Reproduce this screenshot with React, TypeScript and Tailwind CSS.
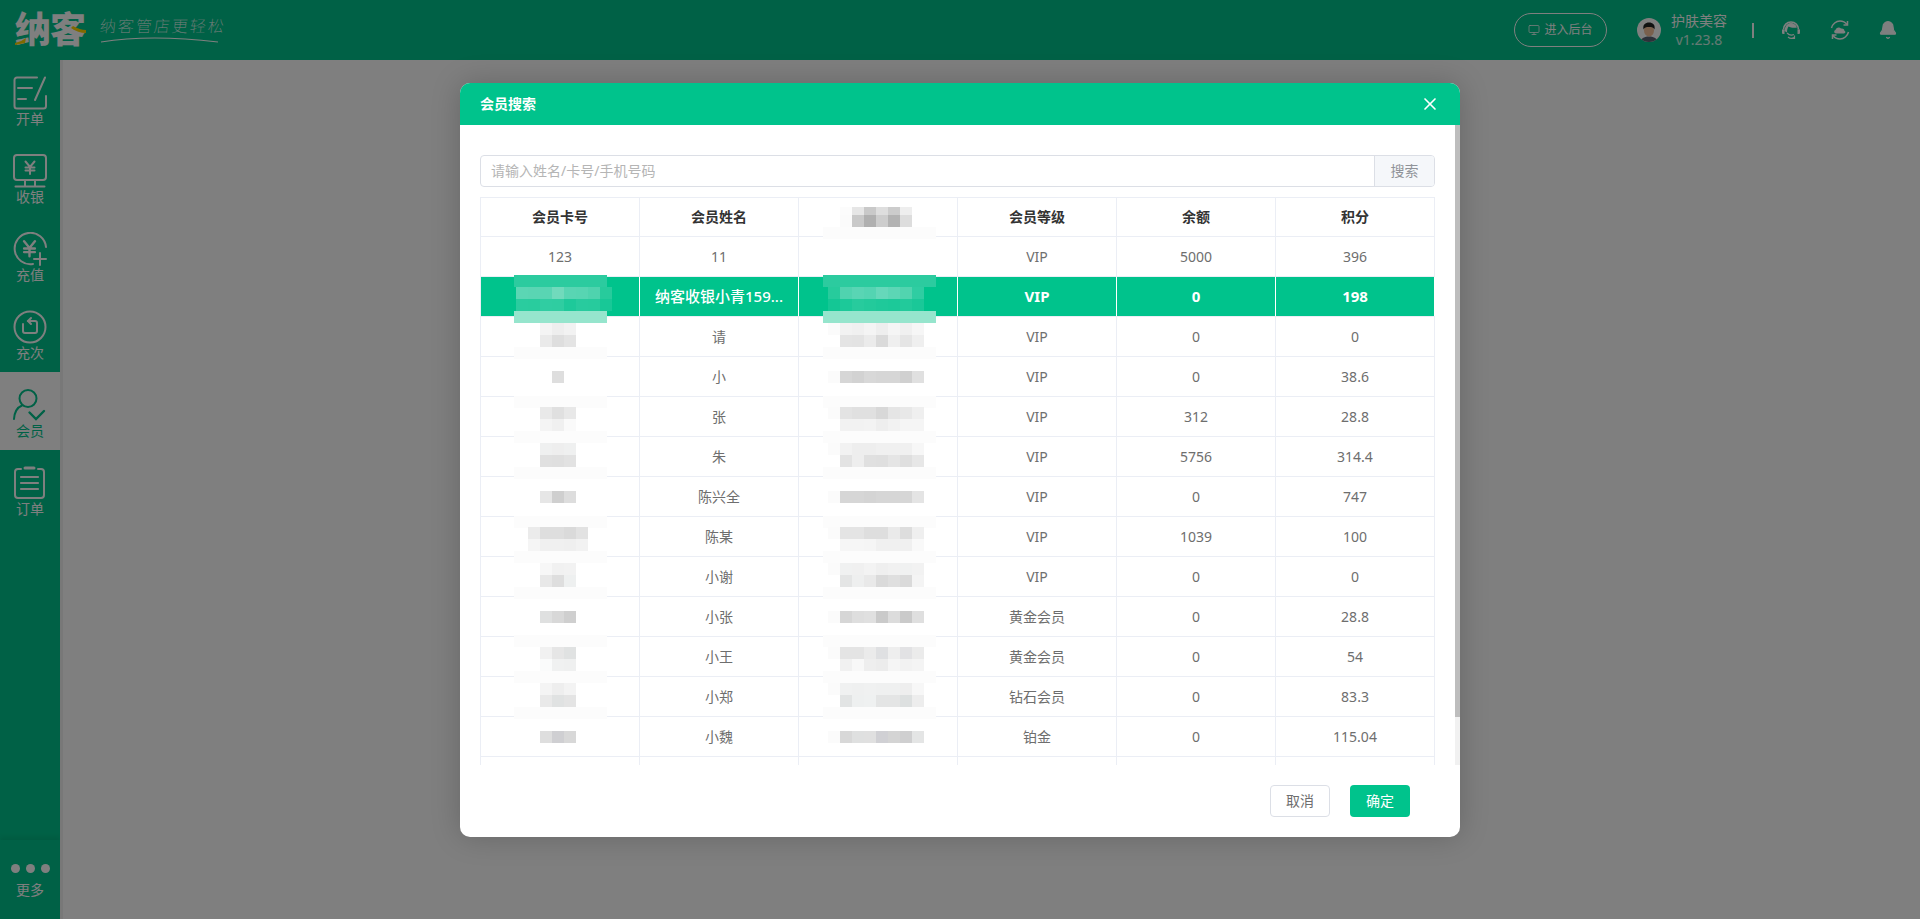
import { Bell, Monitor, X } from "lucide-react";

const navItems = [
  { label: "开单", icon: "order" },
  { label: "收银", icon: "cashier" },
  { label: "充值", icon: "recharge" },
  { label: "充次", icon: "times" },
  { label: "会员", icon: "member", active: true },
  { label: "订单", icon: "list" },
];

const rows = [
  { name: "11", card: "123", level: "VIP", balance: "5000", points: "396" },
  { name: "纳客收银小青159...", level: "VIP", balance: "0", points: "198", selected: true },
  { name: "请", level: "VIP", balance: "0", points: "0" },
  { name: "小", level: "VIP", balance: "0", points: "38.6" },
  { name: "张", level: "VIP", balance: "312", points: "28.8" },
  { name: "朱", level: "VIP", balance: "5756", points: "314.4" },
  { name: "陈兴全", level: "VIP", balance: "0", points: "747" },
  { name: "陈某", level: "VIP", balance: "1039", points: "100" },
  { name: "小谢", level: "VIP", balance: "0", points: "0" },
  { name: "小张", level: "黄金会员", balance: "0", points: "28.8" },
  { name: "小王", level: "黄金会员", balance: "0", points: "54" },
  { name: "小郑", level: "钻石会员", balance: "0", points: "83.3" },
  { name: "小魏", level: "铂金", balance: "0", points: "115.04" },
];

// pixelated (blurred out) areas of the screenshot: [x, y, height, colours]
const mosaicBlocks: [number, number, number, string][] = [
  [840, 207, 8, "#fcfcfc #e6e6e6 #c9c9c9 #dedede #cccccc #eeeeee"],
  [840, 215, 12, "#fbfbfb #c9c9c9 #b0b0b0 #cdcdcd #b3b3b3 #dddddd"],
  [516, 287, 12, "#5bd6b4 #5ad5b3 #59d5b3 #71dabc #59d5b3 #57d5b2 #4fd3ae #27cb9c"],
  [516, 299, 12, "#2acc9f #29cc9e #30cda2 #2fcda1 #1ec99a #28cb9e #27cb9d #18c897"],
  [828, 287, 12, "#27cb9c #50d3af #59d5b4 #54d4b2 #66d8ba #5cd6b5 #52d4af #2fcda2"],
  [828, 299, 12, "#14c795 #1cc999 #27cb9d #23ca9b #1fc99a #1cc999 #22ca9b #1ac898"],
  [540, 323, 12, "#f4f4f4 #eeeeee #f2f2f2"],
  [540, 335, 12, "#eaeaea #dedede #e4e4e4"],
  [828, 323, 12, "#fbfbfb #f2f2f2 #f0f0f0 #f4f4f4 #eeeeee #f5f5f5 #f0f0f0 #f6f6f6"],
  [828, 335, 12, "#ffffff #e4e4e4 #e3e3e3 #ebebeb #dadada #efefef #e5e5e5 #efefef"],
  [552, 371, 12, "#dedede"],
  [828, 371, 12, "#fbfbfb #d6d6d6 #d2d2d2 #d8d8d8 #d6d6d6 #d6d6d6 #d0d0d0 #e0e0e0"],
  [540, 407, 12, "#e9e9e9 #e0e0e0 #e8e8e8"],
  [540, 419, 12, "#f4f4f4 #f0f0f0 #fafafa"],
  [828, 407, 12, "#fbfbfb #e3e3e3 #e0e0e0 #e0e0e0 #d8d8d8 #e5e5e5 #e8e8e8 #efefef"],
  [828, 419, 12, "#ffffff #f2f2f2 #f2f2f2 #f3f3f3 #eeeeee #f2f2f2 #f5f5f5 #f5f5f5"],
  [540, 443, 12, "#eff0f0 #eeeeee #eff0f0"],
  [540, 455, 12, "#e0e0e0 #dfdfdf #e2e2e2"],
  [828, 443, 12, "#fbfbfb #f2f2f2 #eeeeee #eeeeee #f0f0f0 #f0f0f0 #f0f0f0 #f7f7f7"],
  [828, 455, 12, "#ffffff #e3e3e3 #eeeeee #e0e0e0 #dfdfdf #e5e5e5 #dfdfdf #e7e7e7"],
  [540, 491, 12, "#e6e6e6 #cfcfcf #dddddd"],
  [828, 491, 12, "#fbfbfb #d6d6d6 #d6d6d6 #d4d4d4 #d6d6d6 #d6d6d6 #d6d6d6 #e4e4e4"],
  [528, 527, 12, "#ebebeb #dedede #dedede #dadada #e2e2e2"],
  [528, 539, 12, "#f5f5f5 #f0f0f0 #f0f0f0 #efefef #f2f2f2"],
  [828, 527, 12, "#fbfbfb #e4e4e4 #e4e4e4 #dedede #dedede #eaeaea #dddddd #efefef"],
  [828, 539, 12, "#ffffff #f6f6f6 #f6f6f6 #f5f5f5 #f0f0f0 #f0f0f0 #f0f0f0 #f9f9f9"],
  [540, 563, 12, "#f7f7f7 #f1f1f1 #f2f2f2"],
  [540, 575, 12, "#e8e8e8 #dedede #eef0f0"],
  [828, 563, 12, "#fbfbfb #f0f1f1 #f0f0f0 #f3f3f3 #efefef #f1f1f1 #f0f1f1 #f2f2f2"],
  [828, 575, 12, "#ffffff #e4e5e5 #eeefef #e9e9e9 #dadada #dfdfdf #dadada #f4f4f4"],
  [540, 611, 12, "#dfe0e0 #d8d8d8 #cfcfcf"],
  [828, 611, 12, "#fbfbfb #d6d6d6 #dedede #e0e0e0 #cacaca #dcdcdc #cacaca #dfdfdf"],
  [540, 647, 12, "#f1f1f1 #e6e6e6 #e0e2e2"],
  [540, 659, 12, "#fafbfb #f0f1f1 #eff0f0"],
  [828, 647, 12, "#fbfbfb #e4e4e4 #e4e4e4 #ebebeb #dfe0e2 #eeeeee #e2e2e4 #ebebeb"],
  [828, 659, 12, "#ffffff #f1f1f1 #f8f8f8 #eeeeee #ececec #f5f5f5 #f2f2f2 #f4f4f4"],
  [540, 683, 12, "#f4f4f4 #eeeeee #f3f3f3"],
  [540, 695, 12, "#e9e9e9 #e0e2e2 #e4e4e4"],
  [828, 683, 12, "#fbfbfb #f0f1f1 #eff0f0 #f0f1f1 #eff0f0 #eff0f0 #eeeeee #f7f7f7"],
  [828, 695, 12, "#ffffff #e2e4e4 #eef0f0 #eff1f1 #e4e5e5 #e4e5e5 #dde0e0 #ededed"],
  [540, 731, 12, "#dedede #cfcfd2 #d8d8d8"],
  [828, 731, 12, "#fbfbfb #d8d8d8 #dfe0e0 #e0e0e0 #d0d0d4 #d4d4d4 #cfcfd0 #e4e5e5"],
];

const mosaicBands = [
  [823, 227, 113, "#fcfcfc"],
  [514, 275, 93, "#2ccb9f"],
  [823, 275, 113, "#2ccb9f"],
  [514, 311, 93, "#96e5cd"],
  [823, 311, 113, "#96e5cd"],
  ...[347, 396, 431, 467, 516, 551, 587, 635, 671, 707].flatMap((y) => [
    [514, y, 93, "#fcfcfc"],
    [823, y, 113, "#fcfcfc"],
  ]),
] as [number, number, number, string][];

const Yen = ({ x, y, s = 1 }: { x: number; y: number; s?: number }) => (
  <path
    transform={`translate(${x} ${y}) scale(${s})`}
    d="M-4.5 -6 L0 -0.5 L4.5 -6 M0 -0.5 V6.5 M-4.5 0 H4.5 M-4.5 3 H4.5"
    fill="none"
    strokeWidth={2}
  />
);

const NavIcon = ({ name }: { name: string }) => {
  const common = {
    width: 34,
    height: 34,
    viewBox: "0 0 34 34",
    fill: "none",
    stroke: "currentColor",
    strokeWidth: 2,
    strokeLinecap: "round" as const,
  };
  if (name === "order")
    return (
      <svg {...common}>
        <path d="M24 1.5H4A2.5 2.5 0 0 0 1.5 4V30A2.5 2.5 0 0 0 4 32.5H30.5A2.5 2.5 0 0 0 33 30V20" />
        <path d="M32 1.5L22 24M5 12H19M5 23H13" />
      </svg>
    );
  if (name === "cashier")
    return (
      <svg {...common}>
        <rect x="1" y="1" width="32" height="25" rx="3" />
        <path d="M12 26V32M22 26V32M2.5 32.5H31.5" />
        <Yen x={17} y={13.5} />
      </svg>
    );
  if (name === "recharge")
    return (
      <svg {...common}>
        <path d="M33 15A15.7 15.7 0 1 0 20 32" />
        <Yen x={16.5} y={16.5} s={1.2} />
        <path d="M27 21V33M21 27H33" />
      </svg>
    );
  if (name === "times")
    return (
      <svg {...common}>
        <circle cx="17" cy="17" r="15.5" />
        <path d="M15 11H22A2 2 0 0 1 24 13V21A2 2 0 0 1 22 23H12A2 2 0 0 1 10 21V14" />
        <path d="M18 8L15 11L18 14" />
      </svg>
    );
  if (name === "member")
    return (
      <svg {...common}>
        <circle cx="15" cy="10.5" r="8.5" />
        <path d="M1 31C1.5 24 4 19.5 9 17.5" />
        <path d="M16.5 24.5L23 31L31 23" strokeWidth={2.4} />
      </svg>
    );
  return (
    <svg {...common}>
      <path d="M8 3H5A3 3 0 0 0 2 6V29A3 3 0 0 0 5 32H28A3 3 0 0 0 31 29V6A3 3 0 0 0 28 3H25" />
      <path d="M12 2H21" strokeWidth={3} />
      <path d="M8 11H25M8 17H25M8 23H25" strokeWidth={2.2} />
    </svg>
  );
};

const Sidebar = () => (
  <aside className="w-[60px] h-[859px] flex flex-col bg-[#00c38c] text-white">
    {navItems.map((item) => (
      <div
        key={item.label}
        className={`h-[78px] flex flex-col items-center pt-4 ${item.active ? "bg-white text-[#00c38c]" : ""}`}
      >
        <NavIcon name={item.icon} />
        <span className="text-sm leading-4 mt-px">{item.label}</span>
      </div>
    ))}
    <div className="mt-auto h-[79px] flex flex-col items-center shadow-[0_-3px_5px_rgba(0,0,0,0.08)]">
      <div className="flex gap-1.5 mt-6">
        <span className="w-[9px] h-[9px] rounded-full bg-white" />
        <span className="w-[9px] h-[9px] rounded-full bg-white" />
        <span className="w-[9px] h-[9px] rounded-full bg-white" />
      </div>
      <span className="text-sm leading-4 mt-[9px]">更多</span>
    </div>
  </aside>
);

const Header = () => (
  <header className="h-[60px] bg-[#00c38c] flex items-center text-white">
    <div className="relative ml-[15px] w-[72px] h-[36px] flex items-center">
      <span className="text-[36px] leading-9 font-black tracking-[-1px]">纳客</span>
      <svg className="absolute left-0 top-0" width="72" height="36" viewBox="0 0 72 36" fill="none">
        <path d="M0 31Q6 30 11 26L10 31Q5 32 0 33Z" fill="#ffd400" />
        <path d="M58 14Q65 18 71 18V21Q63 21 56 16Z" fill="#ffd400" />
      </svg>
    </div>
    <div className="relative ml-[13px] w-[130px] h-[36px]">
      <span className="block text-base leading-7 font-thin tracking-[2px] -skew-x-6 whitespace-nowrap">纳客管店更轻松</span>
      <svg className="absolute left-0 top-[24px]" width="122" height="10" viewBox="0 0 122 10" fill="none">
        <path d="M1 6Q50 -2 118 6" stroke="#fff" strokeWidth="1.2" />
      </svg>
    </div>
    <div className="ml-auto flex items-center">
      <button className="w-[93px] h-[34px] rounded-full border border-white flex items-center justify-center gap-1 text-xs">
        <Monitor size={12} strokeWidth={1.5} />
        进入后台
      </button>
      <svg className="ml-[30px]" width="24" height="24" viewBox="0 0 24 24">
        <clipPath id="avatar">
          <circle cx="12" cy="12" r="12" />
        </clipPath>
        <g clipPath="url(#avatar)">
          <rect width="24" height="24" fill="#ffffff" />
          <path d="M3 24C4 20 8 18.5 12 18.5C16 18.5 20 20 21 24Z" fill="#5a6272" />
          <ellipse cx="12" cy="12.5" rx="5" ry="6" fill="#f4c19a" />
          <path d="M6.5 11.5C5.5 6.500 8.500 4.500 12 4.500C15.500 4.500 18.500 6.500 17.500 11.500C16.500 9.500 15 9 12 9C9 9 7.500 9.500 6.500 11.500Z" fill="#222222" />
        </g>
      </svg>
      <div className="ml-[10px] w-[56px] flex flex-col items-center">
        <span className="text-sm leading-[19px]">护肤美容</span>
        <span className="text-sm leading-[19px] text-white/80">v1.23.8</span>
      </div>
      <span className="ml-[25px] w-[2px] h-[15px] bg-white" />
      <svg className="ml-[27px]" width="20" height="20" viewBox="0 0 20 20" fill="none">
        <path d="M2.5 9.5C2.5 5 6 2 10 2C14 2 17.5 5 17.5 9.5" stroke="#fff" strokeWidth="1.6" />
        <path d="M4 8C5 4.500 7.500 3 10 3C12.5 3 15 4.500 16 7.500C13.500 8 10 8 7.500 6.500C6.500 8 6 9.500 6 12.500L3.500 11Z" fill="#fff" />
        <path d="M1 9.500H3.500V14H2.500C1.500 14 1 13.500 1 12.500ZM16.500 9.500H19V12.500C19 13.500 18.500 14 17.500 14H16.500Z" fill="#fff" />
        <path d="M6 13C8 15 10.500 15.500 13 14.500" stroke="#fff" strokeWidth="1.2" />
        <path d="M7 17Q10 19.500 13 17.500M13.500 15.500V18.500H10.500" stroke="#fff" strokeWidth="1.2" />
      </svg>
      <svg className="ml-[29px]" width="20" height="20" viewBox="0 0 20 20" fill="none" stroke="#fff" strokeWidth="1.5">
        <path d="M1.500 8C2.500 4 6 1 10 1C13 1 15.500 2.500 17 4.500" />
        <path d="M17.500 1V5H13.500" />
        <path d="M18.500 12C17.500 16 14 19 10 19C7 19 4.500 17.500 3 15.500" />
        <path d="M2.500 19V15H6.500" />
        <path d="M6 13.500C4 13.500 3.500 10.500 5.500 10C5.800 7.500 9.500 6.500 11 8.500C13 8 14.800 9.500 14.300 10.800C16 11.300 15.500 13.500 14 13.500Z" fill="#fff" stroke="none" />
      </svg>
      <Bell className="ml-[28px] mr-[22px]" size={20} fill="#fff" strokeWidth={1.5} />
    </div>
  </header>
);

const Mosaic = () => (
  <svg
    className="absolute left-5 top-[72px] pointer-events-none"
    width="955"
    height="568"
    viewBox="480 197 955 568"
  >
    {mosaicBands.map(([x, y, w, color]) => (
      <rect key={`${x}-${y}`} x={x} y={y} width={w} height={12} fill={color} />
    ))}
    {mosaicBlocks.flatMap(([x, y, h, colors]) =>
      colors.split(" ").map((color, i) => (
        <rect key={`${x}-${y}-${i}`} x={x + i * 12} y={y} width={12} height={h} fill={color} />
      ))
    )}
  </svg>
);

const cellClass = "h-full flex items-center justify-center border-r whitespace-nowrap";

const MemberTable = () => (
  <div className="h-[568px] w-[955px] overflow-hidden border-l border-t border-[#ebeef5] text-sm">
    <div className="grid grid-cols-[repeat(6,159px)] h-[39px] border-b border-[#ebeef5] font-bold text-[#333333]">
      {["会员卡号", "会员姓名", "", "会员等级", "余额", "积分"].map((title, i) => (
        <div key={i} className={`${cellClass} border-[#ebeef5]`}>
          {title}
        </div>
      ))}
    </div>
    {rows.map((row) => (
      <div
        key={row.name}
        className={`grid grid-cols-[repeat(6,159px)] h-10 border-b border-[#ebeef5] ${row.selected ? "bg-[#00c38c] text-white font-bold text-[15px]" : "text-[#6e6e6e]"}`}
      >
        {[row.card ?? "", row.name, "", row.level, row.balance, row.points].map((value, i) => (
          <div
            key={i}
            className={`${cellClass} ${row.selected ? "border-white" : "border-[#ebeef5]"} ${row.selected && i === 1 ? "font-medium" : ""}`}
          >
            {value}
          </div>
        ))}
      </div>
    ))}
    <div className="grid grid-cols-[repeat(6,159px)] h-10">
      {[0, 1, 2, 3, 4, 5].map((i) => (
        <div key={i} className={`${cellClass} border-[#ebeef5]`} />
      ))}
    </div>
  </div>
);

const SearchModal = () => (
  <div className="absolute inset-0 bg-black/50 flex justify-center pt-[83px]">
    <div className="w-[1000px] h-[754px] bg-white rounded-[10px] flex flex-col overflow-hidden shadow-[0_0_30px_rgba(0,0,0,0.2)]">
      <div className="h-[42px] shrink-0 bg-[#00c38c] flex items-center justify-between pl-5 pr-5 text-white">
        <span className="text-sm font-bold">会员搜索</span>
        <X size={20} strokeWidth={2} />
      </div>
      <div className="relative h-[640px] shrink-0 px-5 pt-[30px]">
        <div className="w-[955px] h-8 flex border border-[#dcdfe6] rounded-[4px] text-sm overflow-hidden">
          <div className="flex-1 flex items-center pl-[10px] text-[#b5b5b5]">请输入姓名/卡号/手机号码</div>
          <div className="w-[60px] flex items-center justify-center bg-[#f5f7fa] border-l border-[#dcdfe6] text-[#909399]">
            搜索
          </div>
        </div>
        <div className="h-[10px]" />
        <MemberTable />
        <Mosaic />
        <div className="absolute right-0 top-0 w-[5px] h-full bg-[#f1f1f1]">
          <div className="h-[592px] bg-[#bdbdbd]" />
        </div>
      </div>
      <div className="flex-1 flex justify-end gap-5 pt-5 pr-[50px] text-sm">
        <button className="w-[60px] h-8 rounded-[4px] border border-[#dcdfe6] text-[#6e6e6e]">取消</button>
        <button className="w-[60px] h-8 rounded-[4px] bg-[#00c38c] text-white">确定</button>
      </div>
    </div>
  </div>
);

const App = () => {
  return (
    <div className="relative w-[1920px] h-[919px] overflow-hidden bg-white font-['Noto_Sans','Noto_Sans_CJK_SC',sans-serif]">
      <Header />
      <div className="flex">
        <Sidebar />
        <main className="flex-1 h-[859px] bg-white shadow-[inset_3px_0_0_rgba(0,0,0,0.06)]" />
      </div>
      <SearchModal />
    </div>
  );
};

export default App;
